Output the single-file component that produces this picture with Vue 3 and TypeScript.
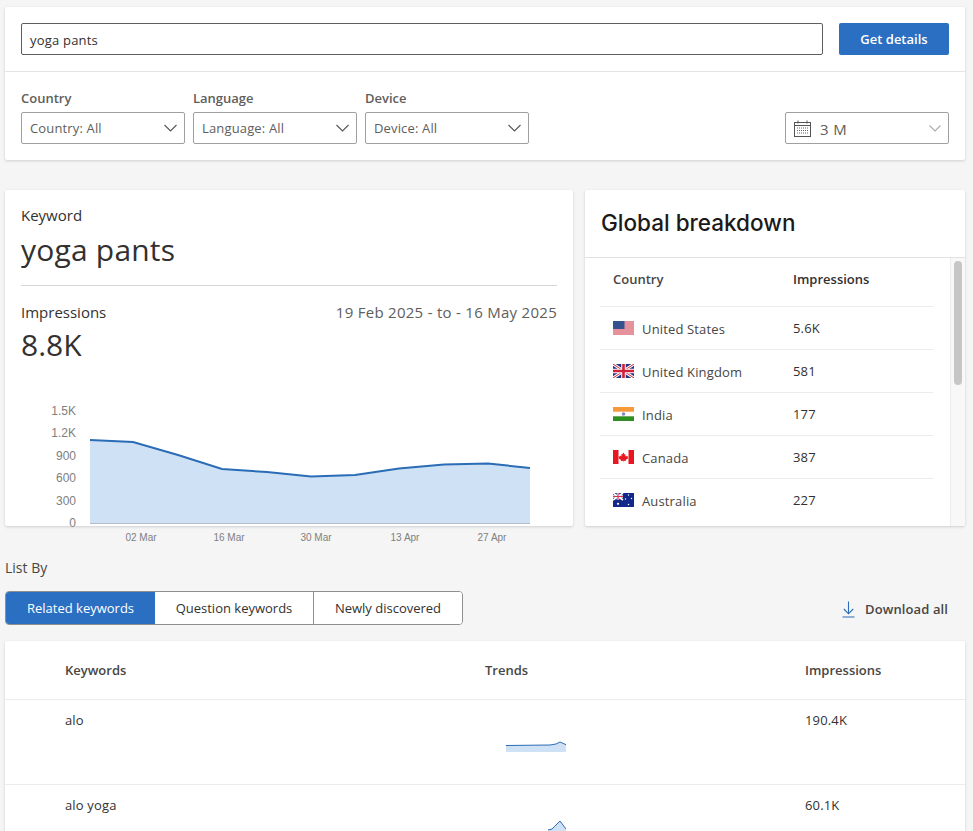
<template>
  <div class="page">
    <section class="card search-card">
      <div class="search-row">
        <div class="search-input">yoga pants</div>
        <button class="btn-primary">Get details</button>
      </div>
      <div class="filter-row">
        <div v-for="f in filters" :key="f" class="filter">
          <label>{{ f }}</label>
          <div class="select">
            <span>{{ f }}: All</span>
            <svg class="chev" width="13" height="8" viewBox="0 0 13 8"><path d="M0.5 1l6 6 6-6" fill="none" stroke="#555" stroke-width="1.1" /></svg>
          </div>
        </div>
        <div class="select date-select">
          <svg width="18" height="17" viewBox="0 0 18 17" class="cal">
            <rect x="0.5" y="2.5" width="16" height="14" fill="none" stroke="#555" />
            <path d="M0.5 5.5h16M4 0.5v3M13 0.5v3" stroke="#555" fill="none" />
            <path d="M3 8h11M3 10.5h11M3 13h11" stroke="#666" stroke-dasharray="1 1" fill="none" />
          </svg>
          <span>3 M</span>
          <svg class="chev" width="12" height="7" viewBox="0 0 12 7"><path d="M0.5 0.5l5.5 5.5 5.5-5.5" fill="none" stroke="#aaa" stroke-width="1.1" /></svg>
        </div>
      </div>
    </section>

    <div class="columns">
      <section class="card keyword-card">
        <div class="kw-head">
          <div class="kw-label">Keyword</div>
          <div class="kw-title">yoga pants</div>
        </div>
        <div class="kw-stats">
          <div class="kw-stats-row">
            <span>Impressions</span>
            <span class="kw-date">19 Feb 2025 - to - 16 May 2025</span>
          </div>
          <div class="kw-value">8.8K</div>
        </div>
        <svg class="chart" width="568" height="165" viewBox="0 0 568 165">
          <text v-for="t in yTicks" :key="t.label" x="71" :y="t.y" text-anchor="end" class="tick-y">{{ t.label }}</text>
          <polygon :points="`85,138 ${chartLine} 525,138`" fill="#cfe2f5" />
          <polyline :points="chartLine" fill="none" stroke="#2a6cb5" stroke-width="2" />
          <line x1="85" y1="138.5" x2="525" y2="138.5" stroke="#b4bcc6" />
          <text v-for="t in xTicks" :key="t.label" :x="t.x" y="156" text-anchor="middle" class="tick-x">{{ t.label }}</text>
        </svg>
      </section>

      <section class="card global-card">
        <h2>Global breakdown</h2>
        <div class="global-body">
          <div class="global-table">
            <div class="g-row g-head">
              <span class="g-country">Country</span>
              <span class="g-num">Impressions</span>
            </div>
            <div v-for="c in countries" :key="c.name" class="g-row">
              <span class="g-country">
                <svg class="flag" width="21" height="14" viewBox="0 0 21 14">
                  <template v-if="c.code === 'us'">
                    <rect width="21" height="14" fill="#fbe4e6" />
                    <path d="M0 1h21M0 3h21M0 5h21M0 7h21M0 9h21M0 11h21M0 13h21" stroke="#d04055" stroke-width="1.1" />
                    <rect width="11.5" height="8" fill="#34528f" />
                  </template>
                  <template v-else-if="c.code === 'gb'">
                    <rect width="21" height="14" fill="#23367f" />
                    <path d="M0 0l21 14M21 0L0 14" stroke="#fff" stroke-width="3" />
                    <path d="M0 0l21 14M21 0L0 14" stroke="#cf1f3a" stroke-width="1" />
                    <path d="M10.5 0v14M0 7h21" stroke="#fff" stroke-width="4.5" />
                    <path d="M10.5 0v14M0 7h21" stroke="#cf1f3a" stroke-width="2.6" />
                  </template>
                  <template v-else-if="c.code === 'in'">
                    <rect width="21" height="5" fill="#f5993b" />
                    <rect y="4.7" width="21" height="4.6" fill="#fff" />
                    <rect y="9.3" width="21" height="4.7" fill="#2f8f23" />
                    <circle cx="10.5" cy="7" r="1.8" fill="#8b86c0" />
                  </template>
                  <template v-else-if="c.code === 'ca'">
                    <rect width="21" height="14" fill="#fff" />
                    <rect width="5.5" height="14" fill="#e8171f" />
                    <rect x="15.5" width="5.5" height="14" fill="#e8171f" />
                    <path d="M10.5 2.5l1 2 1-.5-.4 2.4 1.2-.9.5 1 1.4-.2-.5 1.5.5.4-2.6 1.8.3 1-2.4-.3v1.6h-.3v-1.6l-2.4.3.3-1-2.6-1.8.5-.4-.5-1.5 1.4.2.5-1 1.2.9-.4-2.4 1 .5z" fill="#e8171f" />
                  </template>
                  <template v-else>
                    <rect width="21" height="14" fill="#14278a" />
                    <path d="M0 0l10 7M10 0L0 7" stroke="#fff" stroke-width="1.6" />
                    <path d="M5 0v7M0 3.5h10" stroke="#fff" stroke-width="2.4" />
                    <path d="M5 0v7M0 3.5h10" stroke="#d3324a" stroke-width="1.2" />
                    <circle cx="5" cy="10.8" r="1.1" fill="#fff" />
                    <circle cx="15.5" cy="2" r="0.7" fill="#fff" />
                    <circle cx="12.5" cy="6" r="0.7" fill="#fff" />
                    <circle cx="18.5" cy="5.5" r="0.7" fill="#fff" />
                    <circle cx="15.5" cy="11.5" r="0.8" fill="#fff" />
                  </template>
                </svg>
                <span class="g-name">{{ c.name }}</span>
              </span>
              <span class="g-num">{{ c.value }}</span>
            </div>
          </div>
          <div class="scrollbar"><div class="thumb"></div></div>
        </div>
      </section>
    </div>

    <div class="list-label">List By</div>
    <div class="list-bar">
      <div class="tabs">
        <button v-for="(t, i) in tabs" :key="t" class="tab" :class="{ active: i === 0 }">{{ t }}</button>
      </div>
      <div class="download">
        <svg width="13" height="17" viewBox="0 0 13 17"><path d="M6.5 0.5v12M1.8 8l4.7 4.8L11.2 8M0.5 16h12" fill="none" stroke="#2a6cb5" stroke-width="1.1" /></svg>
        <span>Download all</span>
      </div>
    </div>

    <section class="card kw-table">
      <div class="kt-row kt-head">
        <span>Keywords</span>
        <span>Trends</span>
        <span>Impressions</span>
      </div>
      <div v-for="k in keywords" :key="k.name" class="kt-row">
        <span class="kt-text">{{ k.name }}</span>
        <span class="kt-trend">
          <svg width="60" height="32" viewBox="0 0 60 32">
            <polygon :points="`${k.start},32 ${k.spark} 60,32`" fill="#cfe2f5" />
            <polyline :points="k.spark" fill="none" stroke="#2a6cb5" />
          </svg>
        </span>
        <span class="kt-text">{{ k.value }}</span>
      </div>
    </section>
  </div>
</template>

<script setup lang="ts">
const filters = ['Country', 'Language', 'Device']
const tabs = ['Related keywords', 'Question keywords', 'Newly discovered']

// chart coordinates: svg starts at x=5, y=385 of the page
const chartLine = '85,55 128,57 173,70 217,84 262,87 306,91.5 350,90 394,83.5 439,79.5 483,78.5 525,83'

const yTicks = [
  { label: '1.5K', y: 30 },
  { label: '1.2K', y: 52 },
  { label: '900', y: 75 },
  { label: '600', y: 97 },
  { label: '300', y: 120 },
  { label: '0', y: 142 }
]

const xTicks = [
  { label: '02 Mar', x: 136 },
  { label: '16 Mar', x: 224 },
  { label: '30 Mar', x: 311 },
  { label: '13 Apr', x: 400 },
  { label: '27 Apr', x: 487 }
]

const countries = [
  { code: 'us', name: 'United States', value: '5.6K' },
  { code: 'gb', name: 'United Kingdom', value: '581' },
  { code: 'in', name: 'India', value: '177' },
  { code: 'ca', name: 'Canada', value: '387' },
  { code: 'au', name: 'Australia', value: '227' }
]

const keywords = [
  { name: 'alo', value: '190.4K', start: 0, spark: '0,25.5 44,25 50,24 54,22 60,24.7' },
  { name: 'alo yoga', value: '60.1K', start: 42, spark: '42,25 46,24 54,16 60,24' }
]
</script>

<style scoped>
.page {
  padding: 7px 8px 0 5px;
  font-family: "Open Sans", "Noto Sans", sans-serif;
  font-size: 13px;
  color: #323130;
}

.card {
  background: #fff;
  border-radius: 2px;
  box-shadow: 0 1px 3px rgba(0, 0, 0, 0.16);
}

.search-row {
  display: flex;
  align-items: flex-start;
  gap: 16px;
  padding: 16px;
  height: 32px;
  border-bottom: 1px solid #e4e4e4;
}

.search-input {
  flex: 1;
  height: 30px;
  line-height: 33px;
  padding-left: 8px;
  border: 1px solid #605e5c;
  border-radius: 2px;
  color: #323130;
  letter-spacing: 0.2px;
}

.btn-primary {
  width: 110px;
  height: 32px;
  background: #2a6fc2;
  color: #fff;
  border: none;
  border-radius: 2px;
  font-family: inherit;
  font-size: 13px;
  font-weight: 600;
}

.filter-row {
  display: flex;
  align-items: flex-end;
  gap: 8px;
  padding: 17px 16px 16px;
}

.filter label {
  display: block;
  font-weight: 600;
  font-size: 13px;
  line-height: 18px;
  margin-bottom: 5px;
  color: #605e5c;
}

.select {
  width: 164px;
  height: 32px;
  box-sizing: border-box;
  border: 1px solid #a0a0a0;
  border-radius: 2px;
  display: flex;
  align-items: center;
  padding: 0 7px 0 8px;
  color: #605e5c;
  letter-spacing: 0.15px;
}

.chev {
  margin-left: auto;
}

.date-select {
  margin-left: auto;
}

.date-select span {
  margin-top: 2px;
  font-size: 15px;
  letter-spacing: 0.4px;
}

.cal {
  margin-right: 8px;
}

.columns {
  display: grid;
  grid-template-columns: 568px 380px;
  gap: 12px;
  margin-top: 30px;
}

.keyword-card,
.global-card {
  height: 336px;
}

.kw-head {
  margin: 0 16px;
  padding-top: 14px;
  height: 81px;
  box-sizing: content-box;
  border-bottom: 1px solid #d6d6d6;
}

.kw-label {
  font-size: 15px;
  line-height: 22px;
}

.kw-title {
  font-size: 30px;
  line-height: 47px;
  letter-spacing: 0.2px;
}

.kw-stats {
  padding: 15px 16px 0;
  height: 84px;
  box-sizing: border-box;
}

.kw-stats-row {
  display: flex;
  justify-content: space-between;
  font-size: 15px;
  line-height: 22px;
}

.kw-date {
  color: #605e5c;
  letter-spacing: 0.28px;
}

.kw-value {
  font-size: 30px;
  line-height: 44px;
}

.chart {
  display: block;
  overflow: visible;
  margin-top: 15px;
}

.tick-y {
  font-family: "Liberation Sans", Arial, sans-serif;
  font-size: 12px;
  fill: #808080;
}

.tick-x {
  font-family: "Liberation Sans", Arial, sans-serif;
  font-size: 10px;
  fill: #808080;
}

.global-card {
  display: flex;
  flex-direction: column;
  overflow: hidden;
}

.global-card h2 {
  margin: 0;
  height: 68px;
  box-sizing: border-box;
  padding: 18px 16px 0;
  font-family: Inter, sans-serif;
  font-size: 22.5px;
  line-height: 30px;
  font-weight: 500;
  color: #1b1a19;
  border-bottom: 1px solid #e1e1e1;
}

.global-body {
  flex: 1;
  min-height: 0;
  display: flex;
}

.global-table {
  flex: 1;
  padding: 0 17px 0 15px;
  border-right: 1px solid #ececec;
  overflow: hidden;
}

.g-row {
  display: flex;
  align-items: center;
  height: 42px;
  border-bottom: 1px solid #ececec;
  letter-spacing: 0.15px;
}

.g-row:last-child {
  border-bottom: none;
}

.g-head {
  height: 49px;
  padding-bottom: 6px;
  box-sizing: border-box;
  font-weight: 600;
  color: #484644;
  letter-spacing: 0;
}

.g-country {
  width: 180px;
  padding-left: 13px;
  box-sizing: content-box;
  display: flex;
  align-items: center;
  gap: 8px;
}

.g-name {
  color: #484644;
  padding-top: 2px;
}

.g-num {
  color: #323130;
  margin-top: -1px;
}

.scrollbar {
  width: 14px;
  background: #f8f8f8;
  padding: 3px 3px 0;
  box-sizing: border-box;
}

.thumb {
  height: 124px;
  background: #c6c6c6;
  border-radius: 4px;
}

.list-label {
  margin-top: 32px;
  font-size: 14px;
  line-height: 19px;
  color: #484644;
}

.list-bar {
  display: flex;
  align-items: center;
  justify-content: space-between;
  margin-top: 14px;
  padding-right: 17px;
}

.tabs {
  display: flex;
  height: 34px;
  box-sizing: border-box;
  border: 1px solid #8f8f8f;
  border-radius: 4px;
  overflow: hidden;
  background: #fff;
}

.tab {
  border: none;
  background: #fff;
  font-family: inherit;
  font-size: 13px;
  color: #323130;
  padding: 0;
  width: 159px;
  border-right: 1px solid #8f8f8f;
}

.tab:last-child {
  border-right: none;
  width: 148px;
}

.tab.active {
  background: #2a6fc2;
  color: #fff;
  width: 149px;
  border-right: none;
}

.download {
  display: flex;
  align-items: center;
  gap: 10px;
  font-weight: 600;
  color: #484644;
  margin-top: 2px;
  letter-spacing: 0.1px;
}

.kw-table {
  margin-top: 16px;
}

.kt-row {
  display: grid;
  grid-template-columns: 420px 320px 1fr;
  padding-left: 60px;
  padding-top: 10px;
  box-sizing: border-box;
  border-bottom: 1px solid #ececec;
  height: 85px;
  line-height: 20px;
}

.kt-text {
  letter-spacing: 0.15px;
}

.kt-head {
  height: 59px;
  padding-top: 19px;
  font-weight: 600;
  color: #484644;
}

.kt-trend svg {
  display: block;
  margin: 10px 0 0 21px;
}
</style>

<style>
html,
body {
  background: #f5f5f5;
  overflow: hidden;
}
</style>
